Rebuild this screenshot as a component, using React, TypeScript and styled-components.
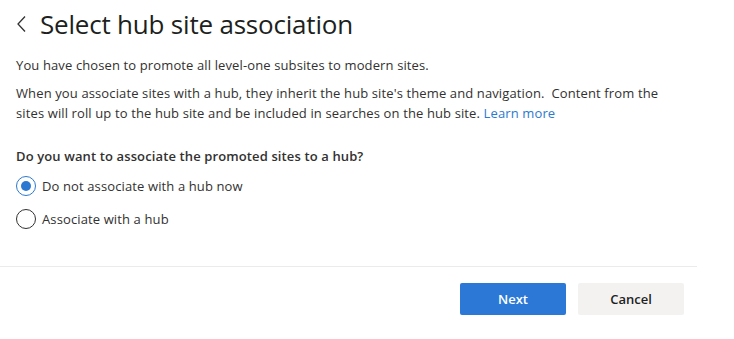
import styled, { createGlobalStyle } from "styled-components";

const Global = createGlobalStyle`
  body {
    margin: 0;
    background: #ffffff;
    font-family: "Open Sans", "Liberation Sans", sans-serif;
    color: #323130;
  }
`;

const Panel = styled.div`
  width: 697px;
  display: flex;
  flex-direction: column;
`;

const Body = styled.div`
  padding: 6px 16px 0 16px;
`;

const Header = styled.div`
  display: flex;
  align-items: center;
  gap: 12px;
  height: 36px;
`;

const BackButton = styled.button`
  border: none;
  background: none;
  padding: 0;
  display: flex;
  align-items: center;
  cursor: pointer;
  color: #323130;
`;

const Title = styled.h1`
  margin: 0;
  font-size: 26px;
  font-weight: 400;
  color: #201f1e;
  letter-spacing: -0.2px;
`;

const Text = styled.p`
  margin: 0;
  font-size: 13px;
  line-height: 20px;
  letter-spacing: 0.12px;
  color: #323130;
`;

const Intro = styled(Text)`
  margin-top: 13px;
`;

const Explain = styled(Text)`
  margin-top: 8px;
  width: 665px;
`;

const Link = styled.a`
  color: #2b79d0;
  text-decoration: none;
`;

const Question = styled(Text)`
  margin-top: 23px;
  font-weight: 600;
`;

const Options = styled.div`
  margin-top: 10px;
  display: flex;
  flex-direction: column;
  gap: 13px;
`;

const Option = styled.label`
  display: flex;
  align-items: center;
  gap: 6px;
  font-size: 13px;
  letter-spacing: 0.12px;
  color: #323130;
  cursor: pointer;
`;

const Circle = styled.span<{ $checked?: boolean }>`
  width: 20px;
  height: 20px;
  box-sizing: border-box;
  border-radius: 50%;
  border: 1.5px solid ${(p) => (p.$checked ? "#2b79d0" : "#323130")};
  display: flex;
  align-items: center;
  justify-content: center;

  &::after {
    content: "";
    width: 10px;
    height: 10px;
    border-radius: 50%;
    background: ${(p) => (p.$checked ? "#2b79d0" : "transparent")};
  }
`;

const Footer = styled.div`
  margin-top: 37px;
  border-top: 1px solid #edebe9;
  display: flex;
  justify-content: flex-end;
  gap: 12px;
  padding: 16px 13px 0 0;
`;

const Button = styled.button<{ $primary?: boolean }>`
  width: 106px;
  height: 32px;
  border: none;
  border-radius: 2px;
  font-family: inherit;
  font-size: 13px;
  font-weight: 600;
  cursor: pointer;
  background: ${(p) => (p.$primary ? "#2b78d6" : "#f3f2f1")};
  color: ${(p) => (p.$primary ? "#ffffff" : "#201f1e")};
`;

function Radio({ checked, label }: { checked?: boolean; label: string }) {
  return (
    <Option>
      <Circle $checked={checked} />
      {label}
    </Option>
  );
}

export default function App() {
  return (
    <>
      <Global />
      <Panel>
        <Body>
          <Header>
            <BackButton aria-label="Back">
              <svg width="12" height="18" viewBox="0 0 12 18">
                <path d="M9 1.5 L2 9 L9 16.5" fill="none" stroke="#323130" strokeWidth="1.3" />
              </svg>
            </BackButton>
            <Title>Select hub site association</Title>
          </Header>
          <Intro>You have chosen to promote all level-one subsites to modern sites.</Intro>
          <Explain>
            When you associate sites with a hub, they inherit the hub site's theme and navigation.&nbsp; Content from the
            sites will roll up to the hub site and be included in searches on the hub site.{" "}
            <Link href="#">Learn more</Link>
          </Explain>
          <Question>Do you want to associate the promoted sites to a hub?</Question>
          <Options>
            <Radio checked label="Do not associate with a hub now" />
            <Radio label="Associate with a hub" />
          </Options>
        </Body>
        <Footer>
          <Button $primary>Next</Button>
          <Button>Cancel</Button>
        </Footer>
      </Panel>
    </>
  );
}
